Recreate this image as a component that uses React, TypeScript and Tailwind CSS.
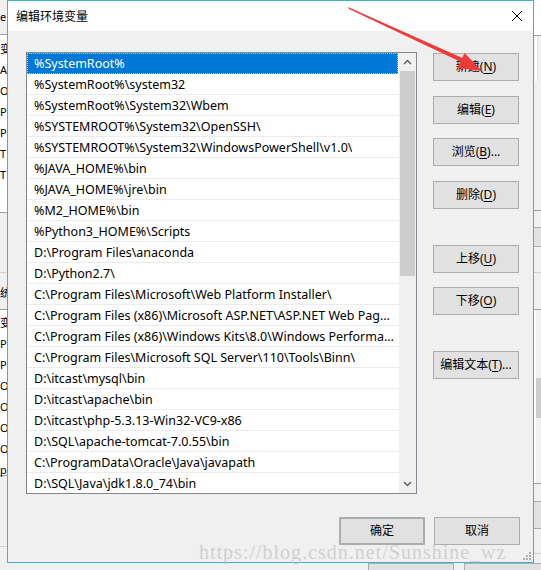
import React from "react";

const paths = [
  "%SystemRoot%",
  "%SystemRoot%\\system32",
  "%SystemRoot%\\System32\\Wbem",
  "%SYSTEMROOT%\\System32\\OpenSSH\\",
  "%SYSTEMROOT%\\System32\\WindowsPowerShell\\v1.0\\",
  "%JAVA_HOME%\\bin",
  "%JAVA_HOME%\\jre\\bin",
  "%M2_HOME%\\bin",
  "%Python3_HOME%\\Scripts",
  "D:\\Program Files\\anaconda",
  "D:\\Python2.7\\",
  "C:\\Program Files\\Microsoft\\Web Platform Installer\\",
  "C:\\Program Files (x86)\\Microsoft ASP.NET\\ASP.NET Web Pages\\v1.0\\",
  "C:\\Program Files (x86)\\Windows Kits\\8.0\\Windows Performance Toolkit\\",
  "C:\\Program Files\\Microsoft SQL Server\\110\\Tools\\Binn\\",
  "D:\\itcast\\mysql\\bin",
  "D:\\itcast\\apache\\bin",
  "D:\\itcast\\php-5.3.13-Win32-VC9-x86",
  "D:\\SQL\\apache-tomcat-7.0.55\\bin",
  "C:\\ProgramData\\Oracle\\Java\\javapath",
  "D:\\SQL\\Java\\jdk1.8.0_74\\bin",
];

const sideButtons = [
  { pre: "新建(", key: "N", post: ")", mt: "mt-[1px]" },
  { pre: "编辑(", key: "E", post: ")", mt: "mt-[15px]" },
  { pre: "浏览(", key: "B", post: ")...", mt: "mt-[14px]" },
  { pre: "删除(", key: "D", post: ")", mt: "mt-[15px]" },
  { pre: "上移(", key: "U", post: ")", mt: "mt-[36px]" },
  { pre: "下移(", key: "O", post: ")", mt: "mt-[14px]" },
  { pre: "编辑文本(", key: "T", post: ")...", mt: "mt-[36px]" },
];

const leftTop = ["变", "A", "O", "P", "P", "T", "T"];
const leftBottom = ["变", "P", "P", "O", "O", "O", "O", "p"];

const WinButton = ({ children, className = "" }: { children: React.ReactNode; className?: string }) => (
  <div className={`w-[86px] h-[28px] flex items-center justify-center bg-[#e1e1e1] border border-[#adadad] text-[12px] text-black ${className}`}>
    {children}
  </div>
);

const App: React.FC = () => {
  return (
    <div className="relative w-[541px] h-[570px] bg-[#f0f0f0] overflow-hidden flex flex-col font-['Noto_Sans','Noto_Sans_CJK_SC',sans-serif] text-[12px] text-black">
      <div className="flex h-[563px]">
        {/* background window, left edge */}
        <div className="w-[7px] flex flex-col overflow-hidden whitespace-nowrap leading-[21px] text-[11px]">
          <div className="h-[35px] pt-[6px] border-b border-[#a0a0a0]">e</div>
          <div className="h-[178px] bg-white border-b border-[#a0a0a0] pt-[3px]">
            {leftTop.map((t, i) => (
              <div key={i}>{t}</div>
            ))}
          </div>
          <div className="h-[60px] border-b border-[#d0d0d0]" />
          <div className="h-[37px] pt-[9px] border-b border-[#a0a0a0]">统</div>
          <div className="h-[166px] bg-white border-b border-[#a0a0a0] pt-[2px]">
            {leftBottom.map((t, i) => (
              <div key={i}>{t}</div>
            ))}
          </div>
          <div className="h-[71px] border-b border-[#d0d0d0]" />
        </div>

        {/* dialog */}
        <div className="w-[527px] flex flex-col border border-[#3db6c9]">
          <div className="h-[30px] bg-white flex items-center justify-between pl-[8px] pr-[10px]">
            <span className="font-['Noto_Sans_CJK_SC',sans-serif] text-[12px] leading-none">编辑环境变量</span>
            <svg width="12" height="12" viewBox="0 0 12 12">
              <path d="M1 1 L11 11 M11 1 L1 11" stroke="#000" strokeWidth="1" />
            </svg>
          </div>
          <div className="flex-1 flex flex-col pt-[21px] pl-[18px] pr-[13px]">
            <div className="flex gap-[16px]">
              <div className="w-[391px] h-[442px] border border-[#828790] bg-white flex overflow-hidden">
                <div className="flex-1 flex flex-col min-w-0 text-[12.5px]">
                  {paths.map((p, i) => (
                    <div
                      key={i}
                      className={
                        i === 0
                          ? "h-[21px] shrink-0 flex items-center pl-[6px] pr-[4px] pt-[2px] bg-[#0078d7] text-white border border-dotted border-[#f2c37a] mr-[1px]"
                          : "h-[21px] shrink-0 flex items-center pl-[7px] pr-[4px] pt-[3px] border-b border-[#ececec]"
                      }
                    >
                      <span className="truncate leading-none">{p}</span>
                    </div>
                  ))}
                </div>
                <div className="w-[17px] shrink-0 bg-[#f0f0f0] flex flex-col">
                  <div className="h-[18px] flex items-center justify-center">
                    <svg width="9" height="6" viewBox="0 0 9 6">
                      <path d="M1 5 L4.5 1.5 L8 5" stroke="#606060" strokeWidth="1.5" fill="none" />
                    </svg>
                  </div>
                  <div className="h-[205px] mx-[1px] bg-[#cdcdcd]" />
                  <div className="flex-1" />
                  <div className="h-[18px] flex items-center justify-center">
                    <svg width="9" height="6" viewBox="0 0 9 6">
                      <path d="M1 1 L4.5 4.5 L8 1" stroke="#606060" strokeWidth="1.5" fill="none" />
                    </svg>
                  </div>
                </div>
              </div>
              <div className="flex flex-col">
                {sideButtons.map((b, i) => (
                  <WinButton key={i} className={b.mt}>
                    <span>
                      {b.pre}
                      <span className="underline underline-offset-2">{b.key}</span>
                      {b.post}
                    </span>
                  </WinButton>
                ))}
              </div>
            </div>
            <div className="flex justify-end gap-[9px] mt-[23px]">
              <WinButton className="border-2 border-[#0078d7]">确定</WinButton>
              <WinButton>取消</WinButton>
            </div>
          </div>
        </div>

        {/* background window, right edge */}
        <div className="flex-1 flex flex-col">
          <div className="h-[36px] bg-white border-b border-[#a0a0a0]" />
          <div className="h-[46px] ml-[1px] w-[3px] bg-white border-r border-[#e0e0e0]" />
          <div className="h-[129px] border-b border-[#a0a0a0]" />
          <div className="h-[16px]" />
          <div className="h-[20px] bg-[#e1e1e1] border-y border-[#adadad]" />
          <div className="h-[26px] border-b border-[#d0d0d0]" />
          <div className="h-[37px] border-b border-[#a0a0a0]" />
          <div className="h-[174px] bg-white border-b border-[#a0a0a0] flex justify-end">
            <div className="w-[5px] bg-[#f0f0f0] flex flex-col">
              <div className="h-[68px]" />
              <div className="h-[40px] bg-[#cdcdcd]" />
            </div>
          </div>
          <div className="h-[17px]" />
          <div className="h-[28px] bg-[#e1e1e1] border-y border-[#adadad]" />
          <div className="h-[25px] border-b border-[#d0d0d0]" />
        </div>
      </div>

      {/* background window, bottom edge */}
      <div className="flex-1 flex pl-[368px] gap-[10px]">
        <div className="w-[86px] bg-[#e1e1e1] border-x border-t border-[#adadad]" />
        <div className="flex-1 bg-[#e1e1e1] border-l border-t border-[#adadad]" />
      </div>

      {/* watermark */}
      <div className="absolute left-[199px] top-[537px] font-['Liberation_Serif',serif] text-[20px] tracking-[1px] text-[#c8c8c8]/80 whitespace-nowrap">
        https://blog.csdn.net/Sunshine_wz
      </div>

      {/* resize grip */}
      <svg className="absolute left-[522px] top-[551px]" width="10" height="10" viewBox="0 0 10 10">
        <rect x="7" y="1" width="2" height="2" fill="#b0b0b0" />
        <rect x="4" y="4" width="2" height="2" fill="#b0b0b0" />
        <rect x="7" y="4" width="2" height="2" fill="#b0b0b0" />
        <rect x="1" y="7" width="2" height="2" fill="#b0b0b0" />
        <rect x="4" y="7" width="2" height="2" fill="#b0b0b0" />
        <rect x="7" y="7" width="2" height="2" fill="#b0b0b0" />
      </svg>

      {/* red annotation arrow */}
      <svg className="absolute left-0 top-0 pointer-events-none" width="541" height="570" viewBox="0 0 541 570">
        <polygon points="348,7 349,9 462,62.5 463.5,58.5" fill="#f03a3a" />
        <polygon points="482,71 464.5,53 457.5,68" fill="#f03a3a" />
      </svg>
    </div>
  );
};

export default App;
